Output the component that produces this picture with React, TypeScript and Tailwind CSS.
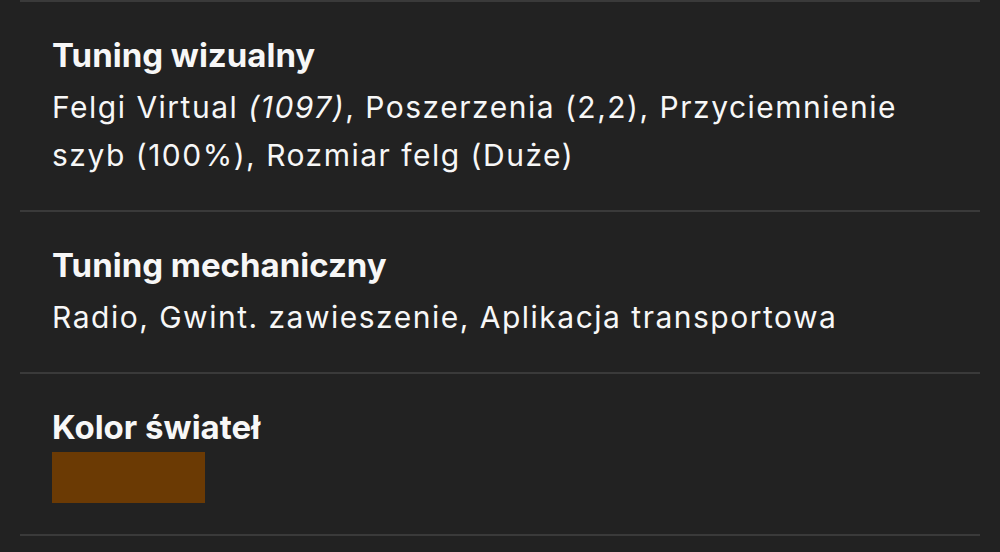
const sections = [
  {
    title: "Tuning wizualny",
    body: (
      <>
        Felgi Virtual <span className="italic">(1097)</span>, Poszerzenia (2,2), Przyciemnienie szyb
        (100%), Rozmiar felg (Duże)
      </>
    ),
  },
  {
    title: "Tuning mechaniczny",
    body: <>Radio, Gwint. zawieszenie, Aplikacja transportowa</>,
  },
];

export default function App() {
  return (
    <div
      className="min-h-screen bg-[#222222] px-5 text-[#f7f7f7]"
      style={{ fontFamily: "Inter, 'Noto Sans', sans-serif" }}
    >
      <div className="border-t-2 border-[#3a3a3a]">
        {sections.map((s) => (
          <div key={s.title} className="border-b-2 border-[#3a3a3a] pl-8 pr-8 pt-[35px] pb-[31px]">
            <h3 className="text-[33px] leading-[36px] font-bold">{s.title}</h3>
            <p className="mt-[10px] text-[30px] leading-[48px] tracking-[1.5px]">{s.body}</p>
          </div>
        ))}

        {/* light colour */}
        <div className="border-b-2 border-[#3a3a3a] pl-8 pr-8 pt-[35px] pb-[31px]">
          <h3 className="text-[33px] leading-[36px] font-bold">Kolor świateł</h3>
          <div className="mt-[7px] h-[51px] w-[153px] bg-[#6b3a04]" />
        </div>
      </div>
    </div>
  );
}
